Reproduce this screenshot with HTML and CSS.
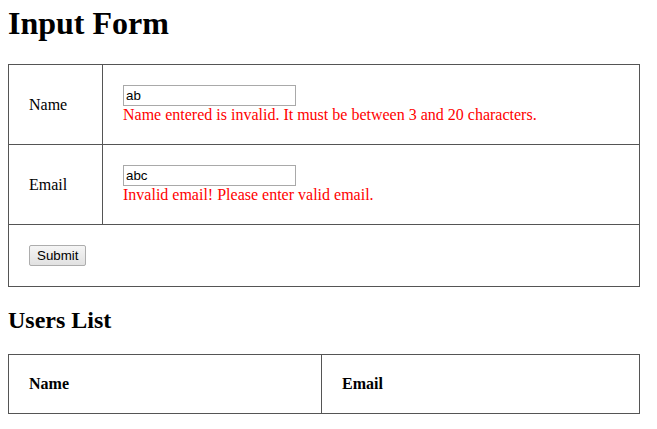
FILE: index.html
```html
<!DOCTYPE html>
<html>
<head>
<meta charset="utf-8">
<link rel="stylesheet" href="styles.css">
</head>
<body>
<h1 class="title">Input Form</h1>
<table class="grid form-table">
  <tr>
    <td class="label">Name</td>
    <td>
      <input class="field" type="text" value="ab">
      <div class="error">Name entered is invalid. It must be between 3 and 20 characters.</div>
    </td>
  </tr>
  <tr>
    <td class="label">Email</td>
    <td>
      <input class="field" type="text" value="abc">
      <div class="error">Invalid email! Please enter valid email.</div>
    </td>
  </tr>
  <tr>
    <td colspan="2"><button class="btn" type="button">Submit</button></td>
  </tr>
</table>
<h2 class="subtitle">Users List</h2>
<table class="grid users-table">
  <tr>
    <th class="col-name">Name</th>
    <th>Email</th>
  </tr>
</table>
</body>
</html>
```
FILE: styles.css
```css
html, body {
  background: #fff;
}
body {
  margin: 5px 8px 8px;
  font-family: "Liberation Serif", "Times New Roman", serif;
  font-size: 16px;
  color: #000;
}
.title {
  font-size: 32px;
  font-weight: bold;
  margin: 0 0 22px;
  line-height: 37px;
}
.grid {
  border-collapse: collapse;
  width: 632px;
}
.grid td, .grid th {
  border: 1px solid #555;
  padding: 20px;
  text-align: left;
  vertical-align: middle;
}
.grid th {
  font-weight: bold;
}
.col-name {
  width: 272px;
}
.label {
  width: 53px;
}
.field {
  display: block;
  box-sizing: border-box;
  width: 173px;
  height: 21px;
  margin: 0;
  padding: 1px 2px;
  border: 1px solid #a9a9a9;
  font-family: "Liberation Sans", Arial, sans-serif;
  font-size: 13.33px;
  color: #000;
  background: #fff;
}
.error {
  color: #f00;
  line-height: 18px;
}
.btn {
  box-sizing: border-box;
  height: 21px;
  padding: 0 7px;
  margin: 0;
  font-family: "Liberation Sans", Arial, sans-serif;
  font-size: 13.33px;
  color: #000;
  background: linear-gradient(#f5f5f5, #e1e1e1);
  border: 1px solid #adadad;
  border-radius: 2px;
  display: block;
}
.subtitle {
  font-size: 24px;
  font-weight: bold;
  margin: 19px 0 20px;
  line-height: 28px;
}
```
